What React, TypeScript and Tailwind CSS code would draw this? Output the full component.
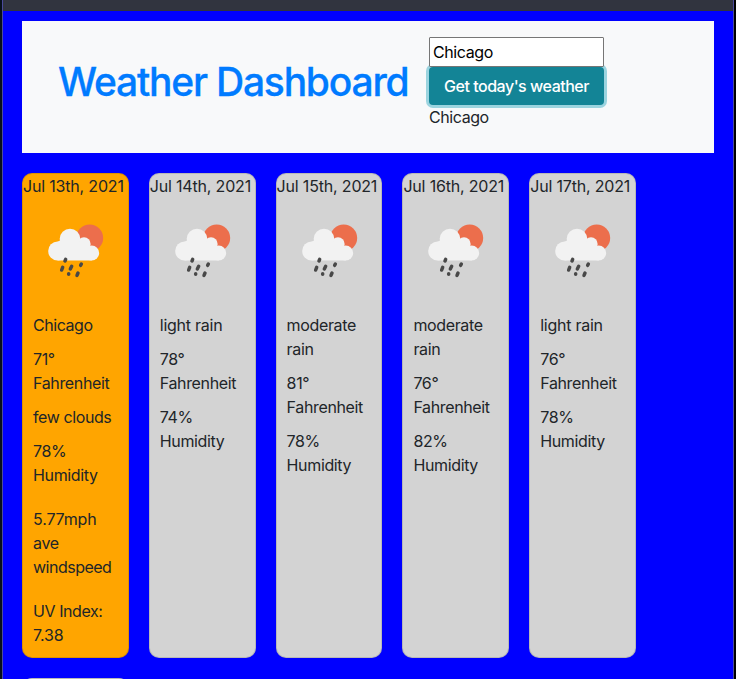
import React from "react";

type Line = { text: string; tracking: string };
type Block = { lines: Line[]; gap: string };
type Day = { date: Line; today?: boolean; blocks: Block[] };

const line = (text: string, tracking = "tracking-[-0.36px]"): Line => ({ text, tracking });
const date = (text: string): Line => line(text, "tracking-[-0.18px]");
const block = (lines: Line[], gap = "mb-2.5"): Block => ({ lines, gap });

const fahrenheit = line("Fahrenheit");
const humidity = line("Humidity");

const days: Day[] = [
  {
    date: date("Jul 13th, 2021"),
    today: true,
    blocks: [
      block([line("Chicago", "tracking-[-0.45px]")]),
      block([line("71°"), fahrenheit]),
      block([line("few clouds", "tracking-[-0.4px]")]),
      block([line("78%"), humidity], "mb-5"),
      block([line("5.77mph", "tracking-[-0.15px]"), line("ave"), line("windspeed", "tracking-[-0.5px]")], "mb-5"),
      block([line("UV Index:", "tracking-[-0.42px]"), line("7.38", "tracking-[-0.15px]")], "mb-0"),
    ],
  },
  {
    date: date("Jul 14th, 2021"),
    blocks: [block([line("light rain", "tracking-[-0.25px]")]), block([line("78°"), fahrenheit]), block([line("74%"), humidity])],
  },
  {
    date: date("Jul 15th, 2021"),
    blocks: [block([line("moderate"), line("rain")]), block([line("81°"), fahrenheit]), block([line("78%"), humidity])],
  },
  {
    date: date("Jul 16th, 2021"),
    blocks: [block([line("moderate"), line("rain")]), block([line("76°"), fahrenheit]), block([line("82%"), humidity])],
  },
  {
    date: date("Jul 17th, 2021"),
    blocks: [block([line("light rain", "tracking-[-0.25px]")]), block([line("76°"), fahrenheit]), block([line("78%"), humidity])],
  },
];

function RainIcon() {
  return (
    <svg viewBox="0 0 225 210" className="mt-[17px] ml-[17px] h-[70px] w-[75px] shrink-0" aria-hidden="true">
      <circle cx="149" cy="69" r="40.5" fill="#ec6e4c" />
      <g fill="#f2f2f2">
        <circle cx="53" cy="108" r="28.5" />
        <circle cx="90" cy="72" r="31" />
        <circle cx="132" cy="87" r="20" />
        <circle cx="155" cy="114" r="22.5" />
        <path d="M53 80L90 60L132 88L155 110V136.500H53Z" />
      </g>
      <g stroke="#484848" strokeWidth="10.5" strokeLinecap="round">
        <path d="M77 133L75 138M68 157L65 165M95 154L91 162M124 147L122 151M86 176.500L86 178M114 174L111 181" />
      </g>
    </svg>
  );
}

function DayCard({ day }: { day: Day }) {
  return (
    <article
      className={`flex h-[485px] w-[106.8px] shrink-0 flex-col rounded-[10px] border border-black/[.125] bg-clip-border ${
        day.today ? "bg-[#ffa500]" : "bg-[#d3d3d3]"
      }`}
    >
      <h2 className={`h-6 whitespace-nowrap ${day.date.tracking}`}>{day.date.text}</h2>
      <RainIcon />
      <div className="mt-7 pl-2.5">
        {day.blocks.map((b, i) => (
          <p key={i} className={b.gap}>
            {b.lines.map((l) => (
              <span key={l.text} className={`block whitespace-nowrap ${l.tracking}`}>
                {l.text}
              </span>
            ))}
          </p>
        ))}
      </div>
    </article>
  );
}

export default function App() {
  return (
    <div className="flex h-[679px] w-[736px] overflow-hidden bg-black font-['Inter',sans-serif] text-base leading-6 text-[#212529]">
      <div className="w-0.5 shrink-0 bg-[#07101c]" />
      <div className="flex w-[732px] shrink-0 flex-col border-x border-[#4b4b9c] bg-[#0000ff]">
        <div className="h-[11px] shrink-0 bg-[#31343f]" />
        <main className="px-[19px] pt-2.5">
          <header className="flex h-[132px] w-[692px] bg-[#f8f9fa]">
            <h1 className="mt-[37px] ml-[36px] w-[371px] text-[39px] leading-[48px] font-medium tracking-[-1.22px] whitespace-nowrap text-[#007bff] [-webkit-text-stroke:0.3px_#007bff]">
              Weather Dashboard
            </h1>
            <div className="mt-4 w-[175px]">
              <input
                aria-label="City"
                defaultValue="Chicago"
                className="relative z-10 block h-[30px] w-full rounded-[1px] border border-[#767676] bg-white px-[3px] tracking-[-0.4px] text-black"
              />
              <button className="block h-[38px] w-full rounded bg-[#138496] text-center font-medium tracking-[-0.48px] whitespace-nowrap text-white shadow-[0_0_0_3px_#9bd4df]">
                Get today's weather
              </button>
              <p className="tracking-[-0.42px]">Chicago</p>
            </div>
          </header>
          <section className="mt-5 flex gap-5">
            {days.map((d) => (
              <DayCard key={d.date.text} day={d} />
            ))}
          </section>
          <div className="mt-5 h-5 w-[106.8px] rounded-[10px] border border-black/[.125] bg-[#d3d3d3]" />
        </main>
      </div>
    </div>
  );
}
